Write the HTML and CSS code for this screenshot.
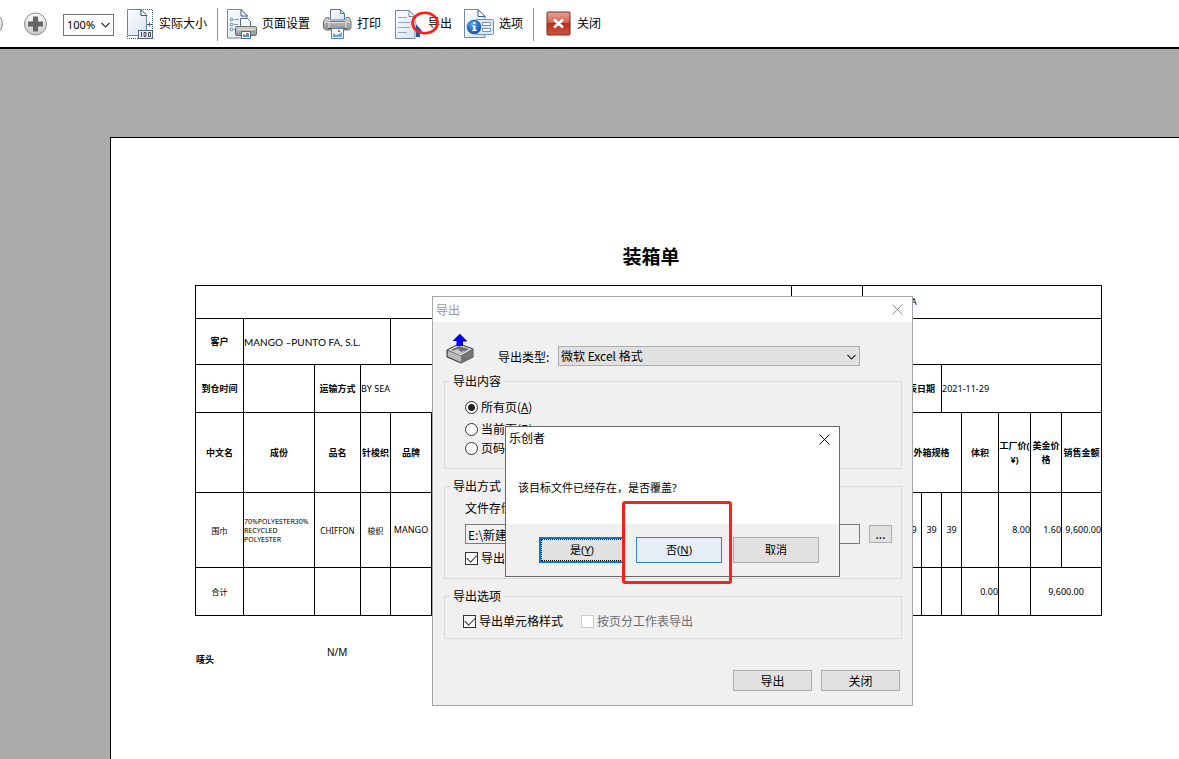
FILE: index.html
```html
<!DOCTYPE html>
<html lang="zh-CN">
<head>
<meta charset="utf-8">
<title>装箱单</title>
<link rel="stylesheet" href="styles.css">
</head>
<body>
<svg class="defs" aria-hidden="true">
  <defs>
    <linearGradient id="ball" x1="0" y1="0" x2="0" y2="1"><stop offset="0" stop-color="#fdfdfd"/><stop offset="1" stop-color="#c9c9c9"/></linearGradient>
    <linearGradient id="page" x1="0" y1="0" x2="1" y2="1"><stop offset="0" stop-color="#ffffff"/><stop offset="1" stop-color="#d5e3f3"/></linearGradient>
    <linearGradient id="metal" x1="0" y1="0" x2="0" y2="1"><stop offset="0" stop-color="#d8d8d8"/><stop offset="1" stop-color="#8e8e8e"/></linearGradient>
    <linearGradient id="red" x1="0" y1="0" x2="0" y2="1"><stop offset="0" stop-color="#e9a499"/><stop offset=".48" stop-color="#d0604f"/><stop offset=".5" stop-color="#b92f1d"/><stop offset="1" stop-color="#d1553f"/></linearGradient>
    <radialGradient id="info" cx=".4" cy=".3" r=".7"><stop offset="0" stop-color="#58a9f0"/><stop offset="1" stop-color="#0b4fae"/></radialGradient>
  </defs>
</svg>

<header class="toolbar">
  <button class="tool tool-out" aria-label="缩小">
    <svg width="23" height="24" viewBox="0 0 23 24"><circle cx="11.5" cy="12" r="11" fill="url(#ball)" stroke="#8a8a8a"/><path d="M4 10h15v5H4z" fill="#666"/></svg>
  </button>
  <button class="tool tool-in" aria-label="放大">
    <svg width="23" height="24" viewBox="0 0 23 24"><circle cx="11.5" cy="12" r="11" fill="url(#ball)" stroke="#8a8a8a"/><path d="M9 4.500h5v5h5v5h-5v5H9v-5H4v-5h5z" fill="#666"/></svg>
  </button>
  <span class="zoom pick">
    <select aria-label="缩放"><option>100%</option></select>
    <svg class="chev" width="9" height="6" viewBox="0 0 9 6"><path d="M.5 1l4 4 4-4" fill="none" stroke="#333" stroke-width="1.200"/></svg>
  </span>
  <button class="tool tool-actual">
    <svg width="26" height="30" viewBox="0 0 26 30">
      <path d="M.5 26V.5H14l6 6V26.500z" fill="url(#page)"/>
      <path d="M.5 26V.5H14l5.500 6V26.500H.5M14 .5v6h6" fill="none" stroke="#6a84a6"/>
      <path d="M14 .5l6 6h-6z" fill="#fff" stroke="#405f87"/>
      <path d="M16 .5h9.500v20M.5 27v2.500H12" fill="none" stroke="#44597a" stroke-dasharray="1 1"/>
      <path d="M20 15.500h5M22.500 13.500v4" fill="none" stroke="#405f87"/>
      <rect x="11.500" y="21.500" width="14" height="8" fill="#e8eff8" stroke="#4b6484"/>
      <path d="M14.500 23v5M17 23.500h2v4h-2zM21.500 23.500h2v4h-2z" fill="none" stroke="#334" stroke-width=".9"/>
    </svg>
    <span>实际大小</span>
  </button>
  <i class="sep"></i>
  <button class="tool">
    <svg width="30" height="30" viewBox="0 0 30 30">
      <path d="M.5.5H14l6 6v22.500H.5z" fill="url(#page)" stroke="#7288a5"/>
      <path d="M14 .5l6.500 6.500H14z" fill="#fff" stroke="#405f87"/>
      <g fill="#fff" stroke="#54749c"><circle cx="4.500" cy="10.500" r="1.300"/><circle cx="4.500" cy="15.500" r="1.300"/><circle cx="4.500" cy="20.500" r="1.300"/></g>
      <path d="M7 10.500h5M7 15.500h4M7 20.500h3" stroke="#8398b3"/>
      <path d="M13.500 18V9.500h7l3 3V18z" fill="#fff" stroke="#566f91"/>
      <rect x="8.500" y="17.500" width="21" height="9" rx="1.500" fill="url(#metal)" stroke="#6c6c6c"/>
      <path d="M10 20.500h18" stroke="#ddd"/>
      <path d="M25 22.500h3" stroke="#4e94de"/>
      <path d="M14.500 22.500h9v7h-9z" fill="#fff" stroke="#4c6a94"/>
      <path d="M16 28v-3l3 1 3-2v4z" fill="#4e94de"/><path d="M19 24h2v2h-2z" fill="#e65a30"/>
    </svg>
    <span>页面设置</span>
  </button>
  <button class="tool">
    <svg width="29" height="30" viewBox="0 0 29 30">
      <path d="M7.500 11V.5h10l4 4V11z" fill="url(#page)" stroke="#5b7699"/>
      <path d="M17.500.5v4h4" fill="none" stroke="#5b7699"/>
      <path d="M3 8.500h3v4h17v-4h3l2 4v6.500l-1.500 2h-24l-2-2v-6.500z" fill="url(#metal)" stroke="#777"/>
      <path d="M2 13.500h25M6 10v10M23 10v10" stroke="#ddd"/>
      <path d="M25 14v4M4 14v4" stroke="#777" stroke-dasharray="1 1"/>
      <path d="M17 18.500h4" stroke="#4e94de"/>
      <path d="M5 19.500h19" stroke="#555"/>
      <path d="M8.500 19.500h12v10h-12z" fill="#f4f9ff" stroke="#5b7bab"/>
      <path d="M10 28v-4l3 2 3-1 3-2v5z" fill="#63a9e8"/><path d="M15 21h2v2h-2z" fill="#e65a30"/>
    </svg>
    <span>打印</span>
  </button>
  <button class="tool tool-export">
    <svg width="28" height="30" viewBox="0 0 28 30">
      <path d="M.5 1.500H14l6 6v22H.5z" fill="url(#page)" stroke="#7288a5"/>
      <path d="M14 1.500l6 6h-6z" fill="#fff" stroke="#7288a5"/>
      <path d="M3 8.500h9M3 13.500h12M3 18.500h12M3 23.500h9" stroke="#8fa5c0"/>
      <path d="M21 15l6 7h-2v6h-4z" fill="#1d57a8"/>
    </svg>
    <span>导出</span>
    <svg class="ring" width="28" height="24" viewBox="0 0 28 24"><ellipse cx="14" cy="12" rx="12.500" ry="10.300" fill="none" stroke="#ff1f14" stroke-width="2.600"/></svg>
  </button>
  <button class="tool">
    <svg width="30" height="30" viewBox="0 0 30 30">
      <path d="M.5.5H14l7 7v21H.5z" fill="url(#page)" stroke="#7288a5"/>
      <path d="M14 .5l7 7h-7z" fill="#fff" stroke="#405f87"/>
      <rect x="11.500" y="10.500" width="18" height="15" rx="1" fill="#dce8f6" stroke="#7390b5"/>
      <path d="M18.500 13.500h8v3h-8zM18.500 19.500h8v3h-8z" fill="#fff" stroke="#7390b5"/>
      <circle cx="10" cy="18" r="7" fill="url(#info)" stroke="#0d4b9d" stroke-width=".5"/>
      <path d="M9 13h2.500v2H9zM8 16.500h3.500V21H13v1H8v-1h1.300v-3.500H8z" fill="#fff"/>
    </svg>
    <span>选项</span>
  </button>
  <i class="sep"></i>
  <button class="tool">
    <svg width="26" height="26" viewBox="0 0 26 26">
      <rect x="1" y="1" width="23" height="23" rx="1" fill="url(#red)" stroke="#7b2a1e"/>
      <path d="M8 8.500l9 8M17 8.500l-9 8" stroke="#fff" stroke-width="2.600"/>
    </svg>
    <span>关闭</span>
  </button>
</header>

<main class="desk">
  <article class="paper">
    <h1>装箱单</h1>
    <table class="packing">
      <colgroup><col class="w48"><col class="w71"><col class="w46"><col class="w30"><col class="w41"><col class="w360"><col class="w71"><col class="w39"><col class="w20"><col class="w20"><col class="w20"><col class="w37"><col class="w32"><col class="w31"><col class="w40"></colgroup>
      <tbody>
      <tr class="h33"><td colspan="6"></td><td></td><td colspan="8" class="origin">A</td></tr>
      <tr class="h46"><th>客户</th><td colspan="3" class="left customer">MANGO –PUNTO FA, S.L.</td><td colspan="11"></td></tr>
      <tr class="h48"><th>到仓时间</th><td></td><th>运输方式</th><td colspan="4" class="left">BY SEA</td><td></td><th colspan="2">表日期</th><td colspan="5" class="left">2021-11-29</td></tr>
      <tr class="h80"><th>中文名</th><th>成份</th><th>品名</th><th>针梭织</th><th>品牌</th><th></th><th></th><th></th><th colspan="3">外箱规格</th><th>体积</th><th class="wrap">工厂价(<br>¥)</th><th class="wrap">美金价<br>格</th><th>销售金额</th></tr>
      <tr class="h75"><td class="small">围巾</td><td class="left small fabric">70%POLYESTER30%<br>RECYCLED<br>POLYESTER</td><td class="small">CHIFFON</td><td class="small">梭织</td><td>MANGO</td><td></td><td></td><td></td><td>39</td><td>39</td><td>39</td><td></td><td class="right">8.00</td><td class="right">1.60</td><td class="right">9,600.00</td></tr>
      <tr class="h48"><td class="small">合计</td><td></td><td></td><td></td><td></td><td></td><td></td><td></td><td></td><td></td><td></td><td class="right">0.00</td><td></td><td colspan="2">9,600.00</td></tr>
      </tbody>
    </table>
    <div class="marks"><b>唛头</b><span>N/M</span></div>
  </article>
</main>

<section class="dialog" role="dialog" aria-labelledby="export-title">
  <header class="dialog-title">
    <span id="export-title">导出</span>
    <button class="x" aria-label="关闭"><svg width="11" height="11" viewBox="0 0 11 11"><path d="M.5.5l10 10M10.500.5l-10 10" fill="none" stroke="#8f8f8f"/></svg></button>
  </header>
  <form class="dialog-body">
    <div class="type-row">
      <svg width="30" height="30" viewBox="0 0 30 30">
        <path d="M1 16l12-6 14 5v8L15 29 1 23z" fill="#9c9c9c" stroke="#333"/>
        <path d="M1 16l14 6 12-7-14-5z" fill="#dedede" stroke="#555"/>
        <path d="M5 16l8-4 10 3-8 5z" fill="#6e6e6e"/><path d="M6 17l6-2 3 3 5-2-5 4z" fill="#c9c9c9"/>
        <path d="M15 22v7l12-6v-8z" fill="#757575"/><path d="M2 17l13 5v6L2 22z" fill="#b9b9b9"/>
        <path d="M13.500 0l7 7h-4v5h-6V7h-4z" fill="#0000ff"/><path d="M13.500 0l7 7h-4v5" fill="none" stroke="#000080"/>
      </svg>
      <label for="kind">导出类型:</label>
      <span class="kind pick">
        <select id="kind"><option>微软 Excel 格式</option></select>
        <svg class="chev" width="9" height="6" viewBox="0 0 9 6"><path d="M.5 1l4 4 4-4" fill="none" stroke="#333" stroke-width="1.200"/></svg>
      </span>
    </div>

    <fieldset class="scope">
      <legend>导出内容</legend>
      <label class="row"><input type="radio" name="scope" checked><span>所有页(<u>A</u>)</span></label>
      <label class="row"><input type="radio" name="scope"><span>当前页(<u>R</u>)</span></label>
      <label class="row row-short"><input type="radio" name="scope"><span>页码</span></label>
    </fieldset>

    <fieldset class="target">
      <legend>导出方式</legend>
      <label class="path-label" for="path">文件存储</label>
      <div class="path-row"><input type="text" id="path" value="E:\新建"><button type="button" class="btn browse">...</button></div>
      <label class="row row-short"><input type="checkbox" checked><span>导出</span></label>
    </fieldset>

    <fieldset class="options">
      <legend>导出选项</legend>
      <label class="row row-short"><input type="checkbox" checked><span>导出单元格样式</span></label>
      <label class="row row-short off"><input type="checkbox" disabled><span>按页分工作表导出</span></label>
    </fieldset>

    <div class="actions"><button type="button" class="btn">导出</button><button type="button" class="btn">关闭</button></div>
  </form>
</section>

<section class="confirm" role="alertdialog" aria-labelledby="confirm-title">
  <header class="confirm-title">
    <span id="confirm-title">乐创者</span>
    <button class="x" aria-label="关闭"><svg width="11" height="11" viewBox="0 0 11 11"><path d="M.5.5l10 10M10.500.5l-10 10" fill="none" stroke="#000"/></svg></button>
  </header>
  <p>该目标文件已经存在，是否覆盖?</p>
  <footer>
    <button class="btn yes">是(<u>Y</u>)</button>
    <button class="btn no">否(<u>N</u>)</button>
    <button class="btn">取消</button>
  </footer>
</section>
<div class="highlight"></div>
</body>
</html>
```

FILE: styles.css
```css
* { box-sizing: border-box; }
html, body { height: 100%; }
body {
  margin: 0;
  display: flex;
  flex-direction: column;
  overflow: hidden;
  position: relative;
  background: #ababab;
  color: #000;
  font: 12px/16px "Noto Sans", "Noto Sans CJK SC", sans-serif;
}
button, select, input { font: inherit; color: inherit; margin: 0; }
button { cursor: default; }
svg { display: block; flex: none; }
.defs { position: absolute; width: 0; height: 0; }

/* toolbar */
.toolbar {
  flex: none;
  display: flex;
  align-items: center;
  height: 49px;
  padding-top: 1px;
  background: #fff;
  border-bottom: 2px solid #000;
  white-space: nowrap;
}
.tool {
  position: relative;
  display: flex;
  align-items: center;
  gap: 5px;
  padding: 0;
  margin-right: 13px;
  border: 0;
  background: none;
}
.tool > span { margin-bottom: 1px; }
.tool-out { margin: 0 21px 0 -20px; }
.tool-in { margin-right: 16px; }
.tool-actual { gap: 6px; }
.tool-export { margin-right: 12px; margin-left: 1px; }
.tool:has(+ .sep) { margin-right: 10px; }
.sep { width: 1px; height: 33px; margin-right: 9px; background: #8c8c8c; }
.sep + .tool:last-child { margin-left: 3px; }
.ring { position: absolute; left: 16px; top: 2px; }

.pick { position: relative; display: flex; }
.pick select { appearance: none; width: 100%; border-radius: 0; outline: 0; }
.pick .chev { position: absolute; right: 4px; top: 8px; pointer-events: none; }
.zoom { width: 51px; margin: 2px 13px 0 0; }
.zoom select { height: 22px; padding: 0 3px; border: 1px solid #707070; background: #fff; font-size: 11px; }

/* printed sheet */
.desk { flex: 1; padding: 88px 0 0 110px; min-height: 0; overflow: hidden; }
.paper {
  min-height: 100%;
  padding: 105px 77px 0 84px;
  border: solid #000;
  border-width: 1px 0 0 1px;
  background: #fff;
  font-size: 9px;
}
.paper h1 { margin: 0 0 14px; padding-left: 5px; font-size: 19px; line-height: 28px; text-align: center; }
.packing { width: 907px; table-layout: fixed; border-collapse: collapse; line-height: 12px; }
.packing td, .packing th { padding: 0; border: 1px solid #000; text-align: center; vertical-align: middle; white-space: nowrap; }
.packing .left { text-align: left; }
.packing .right { text-align: right; }
.packing .customer { font-family: Lato, sans-serif; font-size: 10px; }
.packing .small { font-size: 8px; line-height: 9px; }
.packing .fabric { font-size: 7px; }
.packing .wrap { line-height: 14px; }
.packing .origin { padding-left: 48px; text-align: left; }
.w20 { width: 20px; } .w30 { width: 30px; } .w31 { width: 31px; } .w32 { width: 32px; }
.w37 { width: 37px; } .w39 { width: 39px; } .w40 { width: 40px; } .w41 { width: 41px; }
.w46 { width: 46px; } .w48 { width: 48px; } .w71 { width: 71px; } .w360 { width: 360px; }
.h33 { height: 33px; } .h46 { height: 46px; } .h48 { height: 48px; } .h75 { height: 75px; } .h80 { height: 80px; }
.marks { display: grid; grid-template-columns: 131px auto; margin-top: 28px; padding-left: 1px; }
.marks b { padding-top: 8px; }
.marks span { font-size: 10px; }

/* shared controls */
.btn {
  min-width: 79px;
  height: 21px;
  padding: 0;
  border: 1px solid #adadad;
  background: #e1e1e1;
  text-align: center;
  line-height: 18px;
}
.x { display: flex; padding: 0; border: 0; background: none; }

/* export dialog */
.dialog {
  position: absolute;
  left: 432px;
  top: 296px;
  width: 481px;
  border: 1px solid #a6a6a6;
  background: #f0f0f0;
  font-family: "Noto Sans CJK SC", sans-serif;
}
.dialog-title { display: flex; align-items: center; justify-content: space-between; height: 25px; padding: 0 9px 0 3px; background: #fff; color: #999; line-height: 14px; }
.dialog-body { padding: 12px 10px 14px 11px; }
.type-row { display: flex; align-items: flex-start; margin: 0 0 7px 2px; }
.type-row label { width: 60px; margin: 15px 0 0 22px; white-space: nowrap; }
.kind { flex: none; width: 302px; margin: 12px 0 0; }
.kind select { height: 20px; padding: 0 2px; border: 1px solid #adadad; background: #e1e1e1; }
fieldset { min-width: 0; margin: 0 0 9px; border: 1px solid #dcdcdc; }
legend { height: 16px; margin-left: -15px; padding: 0 3px; line-height: 16px; }
.scope { padding: 7px 20px 12px; }
.target { padding: 6px 9px 12px 20px; }
.options { display: flex; gap: 18px; margin-bottom: 31px; padding: 9px 18px; }
.options legend { margin-left: -13px; }
.row { display: flex; align-items: center; gap: 3px; height: 22px; white-space: nowrap; }
.row-short { height: 16px; }
.path-label { display: block; }
.path-row { display: flex; align-items: center; gap: 9px; margin: 8px 0 6px; }
.path-row input { flex: 1; min-width: 0; height: 20px; padding: 0 2px; border: 1px solid #7a7a7a; background: #f0f0f0; }
.browse { min-width: 23px; height: 18px; line-height: 14px; }
.off { color: #6d6d6d; }
.actions { display: flex; justify-content: flex-end; gap: 9px; padding-right: 2px; }

input[type="radio"], input[type="checkbox"] {
  appearance: none;
  flex: none;
  width: 13px;
  height: 13px;
  border: 1px solid #333;
  background: #fff;
}
input[type="radio"] { border-radius: 50%; }
input[type="radio"]:checked { background: radial-gradient(circle, #222 0 3px, #fff 4px); }
input[type="checkbox"] { display: grid; place-items: center; }
input[type="checkbox"]:checked::after {
  content: "";
  width: 9px;
  height: 5px;
  margin-bottom: 3px;
  border: solid #333;
  border-width: 0 0 1px 1px;
  rotate: -45deg;
}
input[type="checkbox"]:disabled { border-color: #ccc; }

/* overwrite prompt */
.confirm {
  position: absolute;
  left: 505px;
  top: 426px;
  width: 335px;
  border: 1px solid #686868;
  background: #fff;
}
.confirm-title { display: flex; align-items: center; justify-content: space-between; height: 24px; padding: 0 9px 0 3px; }
.confirm p { margin: 0; padding: 29px 12px 28px; font-size: 11px; }
.confirm footer { display: grid; grid-template-columns: repeat(3, 1fr); gap: 11px; padding: 13px 20px 13px 33px; background: #f0f0f0; font-size: 11px; }
.confirm .btn { height: 26px; line-height: 22px; }
.confirm .yes { border: 2px solid #0078d7; outline: 1px dotted #000; outline-offset: -3px; line-height: 20px; }
.confirm .no { border-color: #2f86cc; background: #e5edf5; }

.highlight {
  position: absolute;
  left: 622px;
  top: 501px;
  width: 110px;
  height: 83px;
  border: 3px solid #ff1f14;
  border-radius: 3px;
  pointer-events: none;
}
```
